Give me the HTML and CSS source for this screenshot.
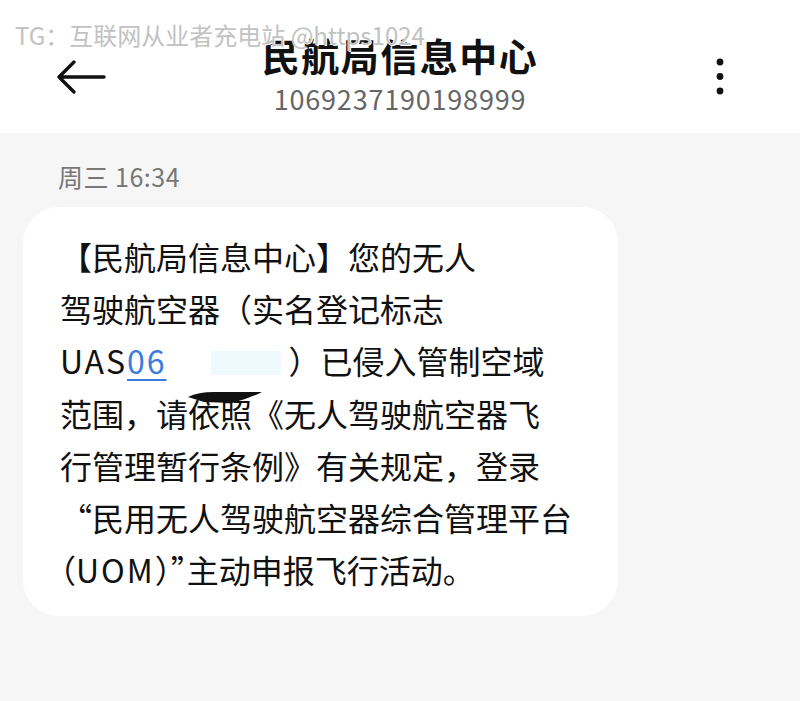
FILE: index.html
```html
<!DOCTYPE html>
<html lang="zh-CN">
<head>
    <meta charset="UTF-8">
    <meta name="viewport" content="width=device-width, initial-scale=1.0">
    <title>民航局信息中心</title>
    <link rel="stylesheet" href="styles.css">
</head>
<body>
    <!-- watermark over the top bar -->
    <div class="watermark">TG：互联网从业者充电站 @https1024</div>

    <header class="topbar">
        <div class="back">
            <svg width="50" height="36" viewBox="0 0 50 36">
                <path d="M18 3 L3 18 L18 33 M3 18 L48 18" fill="none" stroke="#111" stroke-width="3.4" stroke-linecap="round" stroke-linejoin="round"/>
            </svg>
        </div>
        <div class="contact">
            <h1>民航局信息中心</h1>
            <div class="number">1069237190198999</div>
        </div>
        <div class="more">
            <svg width="10" height="40" viewBox="0 0 10 40">
                <circle cx="5" cy="5" r="3.4" fill="#111"/>
                <circle cx="5" cy="19.5" r="3.4" fill="#111"/>
                <circle cx="5" cy="34" r="3.4" fill="#111"/>
            </svg>
        </div>
    </header>

    <main class="thread">
        <div class="time">周三 16:34</div>
        <div class="bubble">
            <p class="text">
                【民航局信息中心】您的无人<br>
                驾驶航空器（实名登记标志<br>
                <span class="latin">UAS<a class="link">06</a></span><span class="redacted"></span>）已侵入管制空域<br>
                范围，请依照《无人驾驶航空器飞<br>
                行管理暂行条例》有关规定，登录<br>
                “民用无人驾驶航空器综合管理平台<br>
                <span class="half">（</span><span class="latin">UOM</span><span class="half">）”</span>主动申报飞行活动。
            </p>
            <svg class="blot" width="80" height="20" viewBox="0 0 80 20">
                <path d="M0 6 Q10 1 26 1 L74 1 Q60 8 44 12 L16 11 Z" fill="#111"/>
            </svg>
        </div>
    </main>
</body>
</html>
```

FILE: styles.css
```css
body {
    margin: 0;
    background-color: #f6f6f6;
    font-family: "Noto Sans CJK SC", "Noto Sans", sans-serif;
    color: #111;
}
.watermark {
    position: absolute;
    left: 15px;
    top: 19px;
    font-size: 24px;
    line-height: 32px;
    color: #c2c2c2;
    text-shadow: 0 0 1px #fff, 1px 1px 0 #fff;
    white-space: nowrap;
}
.topbar {
    height: 133px;
    box-sizing: border-box;
    padding-top: 20px;
    background-color: #ffffff;
    display: grid;
    grid-template-columns: 1fr auto 1fr;
    align-items: center;
}
.back {
    padding-left: 56px;
    display: flex;
}
.contact {
    text-align: center;
    margin-top: -4px;
}
.contact h1 {
    margin: 0;
    font-size: 38px;
    line-height: 44px;
    font-weight: 700;
    letter-spacing: 1.5px;
}
.number {
    margin-top: 5px;
    font-size: 27px;
    line-height: 34px;
    color: #666;
    letter-spacing: 0.8px;
}
.more {
    justify-self: end;
    padding-right: 75px;
    display: flex;
}
.thread {
    padding: 28px 0 0 23px;
}
.time {
    padding-left: 35px;
    font-size: 25px;
    line-height: 30px;
    color: #777;
    letter-spacing: 0.5px;
}
.bubble {
    position: relative;
    margin-top: 16px;
    width: 595px;
    box-sizing: border-box;
    padding: 23px 20px 21px 37px;
    background-color: #ffffff;
    border-radius: 36px;
}
.text {
    margin: 0;
    font-size: 32px;
    line-height: 52.2px;
    white-space: nowrap;
}
.latin {
    letter-spacing: 2px;
}
.half {
    font-feature-settings: "halt";
}
.link {
    color: #3b7ddd;
    text-decoration: underline;
    text-underline-offset: 5px;
    text-decoration-thickness: 2px;
}
.redacted {
    display: inline-block;
    width: 70px;
    height: 24px;
    margin: 0 8px 0 44px;
    background-color: #eefaff;
    vertical-align: -1px;
}
.blot {
    position: absolute;
    left: 165px;
    top: 184px;
}
```
